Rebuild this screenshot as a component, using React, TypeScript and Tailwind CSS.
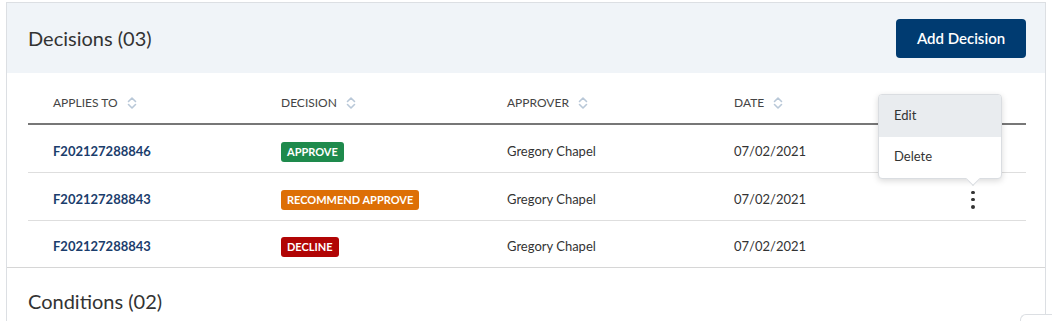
const font = { fontFamily: "Lato, 'Open Sans', sans-serif" };

function SortIcon() {
  return (
    <svg width="10" height="14" viewBox="0 0 10 14" className="ml-[9px]" fill="none">
      <path d="M1.5 5.5 L5 2 L8.5 5.5" stroke="#b9c8d8" strokeWidth="1.6" strokeLinecap="round" strokeLinejoin="round" />
      <path d="M1.5 8.5 L5 12 L8.5 8.5" stroke="#b9c8d8" strokeWidth="1.6" strokeLinecap="round" strokeLinejoin="round" />
    </svg>
  );
}

type Row = { id: string; decision: string; tone: string; approver: string; date: string; menu?: boolean };

const rows: Row[] = [
  { id: "F202127288846", decision: "APPROVE", tone: "bg-[#1e8a4c]", approver: "Gregory Chapel", date: "07/02/2021" },
  { id: "F202127288843", decision: "RECOMMEND APPROVE", tone: "bg-[#dd6f06]", approver: "Gregory Chapel", date: "07/02/2021", menu: true },
  { id: "F202127288843", decision: "DECLINE", tone: "bg-[#b10505]", approver: "Gregory Chapel", date: "07/02/2021" },
];

function Kebab() {
  return (
    <div className="flex h-[18px] w-[10px] flex-col items-center justify-between">
      <span className="h-[3.5px] w-[3.5px] rounded-full bg-[#333]" />
      <span className="h-[3.5px] w-[3.5px] rounded-full bg-[#333]" />
      <span className="h-[3.5px] w-[3.5px] rounded-full bg-[#333]" />
    </div>
  );
}

function ActionMenu() {
  return (
    <div className="absolute right-[24px] bottom-[calc(100%+12px)] z-10 w-[124px]">
      <div className="overflow-hidden rounded-[4px] border border-[#dadde1] bg-white shadow-[0_2px_6px_rgba(0,0,0,0.15)]">
        <div className="flex h-[42px] items-center bg-[#e9ecef] px-[15px] text-[13px] text-[#333]">Edit</div>
        <div className="flex h-[41px] items-center px-[15px] text-[13px] text-[#333]">Delete</div>
      </div>
      <div className="absolute right-[24px] bottom-[-5px] h-[10px] w-[10px] rotate-45 border-r border-b border-[#dadde1] bg-white" />
    </div>
  );
}

export default function App() {
  return (
    <div className="relative h-[321px] w-[1052px] overflow-hidden bg-white" style={font}>
      <div className="ml-[6px] mt-[2px] w-[1040px] border border-b-0 border-[#dcdfe3]">
        <section className="border-b border-[#d6d6d6]">
          <header className="flex h-[70px] items-center justify-between bg-[#f0f4f8] pl-[21px] pr-[19px]">
            <h2 className="text-[20px] text-[#333]">Decisions (03)</h2>
            <button className="h-[39px] w-[130px] rounded-[4px] bg-[#003b71] text-[15px] font-semibold text-white">
              Add Decision
            </button>
          </header>

          <div className="pl-[21px] pr-[19px]">
            <div className="flex h-[52px] items-center border-b-2 border-[#777] pt-[10px] pl-[25px] text-[12px] uppercase text-[#444]">
              <div className="flex w-[228px] items-center">Applies To<SortIcon /></div>
              <div className="flex w-[226px] items-center">Decision<SortIcon /></div>
              <div className="flex w-[227px] items-center">Approver<SortIcon /></div>
              <div className="flex flex-1 items-center">Date<SortIcon /></div>
            </div>

            {rows.map((r, i) => (
              <div
                key={i}
                className={
                  "flex items-center pt-[6px] pl-[25px] text-[13px] " +
                  (i < rows.length - 1 ? "h-[48px] border-b border-[#dedede]" : "h-[46px]")
                }
              >
                <div className="w-[228px] font-bold text-[#1b3d6c]">{r.id}</div>
                <div className="w-[226px]">
                  <span className={"inline-block rounded-[3px] px-[6px] py-[3px] text-[11px] font-bold leading-[14px] text-white " + r.tone}>
                    {r.decision}
                  </span>
                </div>
                <div className="w-[227px] text-[#333]">{r.approver}</div>
                <div className="flex-1 text-[#333]">{r.date}</div>
                <div className="relative flex w-[106px] justify-center">
                  {r.menu && (
                    <>
                      <Kebab />
                      <ActionMenu />
                    </>
                  )}
                </div>
              </div>
            ))}
          </div>
        </section>

        <section>
          <header className="flex h-[66px] items-center pl-[21px]">
            <h2 className="text-[20px] text-[#333]">Conditions (02)</h2>
          </header>
        </section>
      </div>
      <div className="absolute left-[1020px] top-[314px] h-[20px] w-[40px] rounded-tl-[6px] border-t border-l border-[#dcdfe3] bg-white" />
    </div>
  );
}
